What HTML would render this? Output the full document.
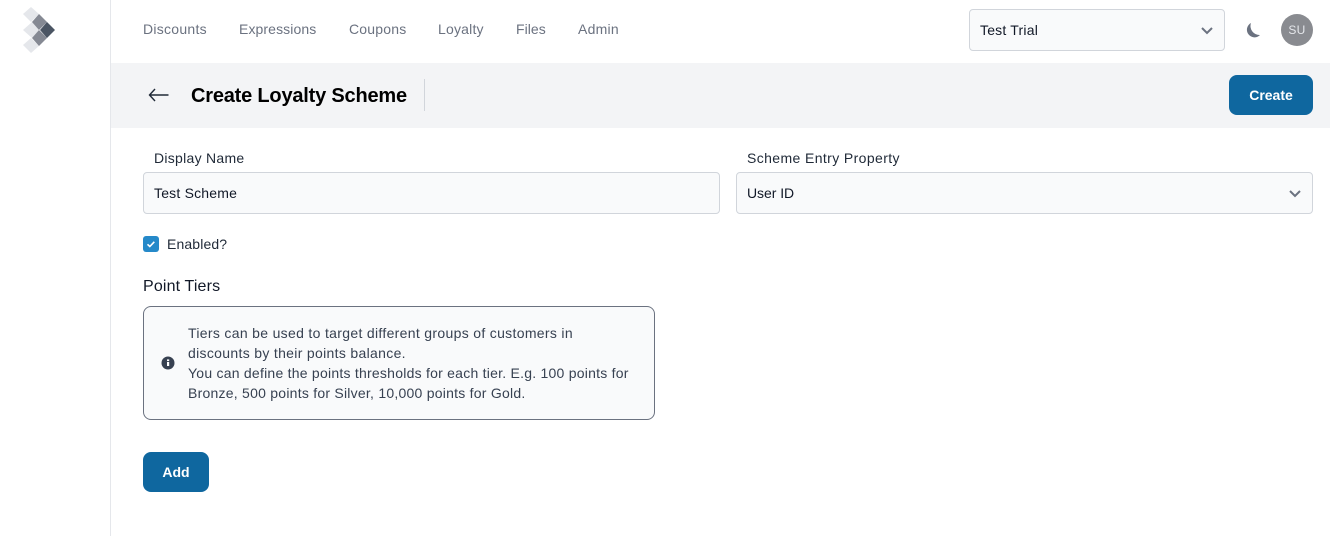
<!DOCTYPE html>
<html><head><meta charset="utf-8"><style>
*{box-sizing:border-box}
html,body{margin:0;padding:0;background:#fff}
body{width:1330px;height:536px;overflow:hidden;position:relative;font-family:"Liberation Sans",sans-serif;color:#1f2937}
.a{position:absolute;white-space:nowrap}
.t{line-height:20px;font-size:14px}
.nav{color:#6b7280;top:19px;line-height:20px;font-size:14px}
.box{position:absolute;background:#f9fafb;border:1px solid #d1d5db;border-radius:4px}
.btn{position:absolute;background:#0f679f;border-radius:8px;color:#fff;font-weight:bold;font-size:14px;text-align:center;line-height:40px}
.info{left:188px;font-size:14px;line-height:20px;color:#374151}
</style></head><body>
<div class="a" style="left:110px;top:0;width:1px;height:536px;background:#e5e7eb"></div>
<svg class="a" style="left:0;top:0" width="60" height="60" viewBox="0 0 60 60">
<polygon points="23,14 31,7 39,14 31,22" fill="#e5e7eb"/>
<polygon points="23,30 32,22 39,30 32,38" fill="#e5e7eb"/>
<polygon points="23,45 31,38 39,46 31,53" fill="#e5e7eb"/>
<polygon points="32,22 39,14 47,22 39,30" fill="#858993"/>
<polygon points="32,38 39,30 47,38 39,46" fill="#858993"/>
<polygon points="40,30 47,22 55,30 47,38" fill="#4b5563"/>
</svg>
<div class="a nav" style="left:143px;letter-spacing:.27px">Discounts</div>
<div class="a nav" style="left:239px;letter-spacing:.1px">Expressions</div>
<div class="a nav" style="left:349px;letter-spacing:.2px">Coupons</div>
<div class="a nav" style="left:438px;letter-spacing:.2px">Loyalty</div>
<div class="a nav" style="left:516px;letter-spacing:.05px">Files</div>
<div class="a nav" style="left:578px;letter-spacing:.25px">Admin</div>
<div class="box" style="left:969px;top:9px;width:256px;height:42px"></div>
<div class="a t" style="left:980px;top:20px;color:#111827;letter-spacing:.2px">Test Trial</div>
<svg class="a" style="left:1200px;top:23px" width="14" height="14" viewBox="0 0 14 14"><path d="M2 5l5 5 5-5" fill="none" stroke="#6b7280" stroke-width="2"/></svg>
<svg class="a" style="left:1244px;top:21px" width="18" height="18" viewBox="0 0 18 18"><path d="M7 2A7.600 7.600 0 1 0 16 14A9 9 0 0 1 7 2Z" fill="#6b7280"/></svg>
<div class="a" style="left:1281px;top:14px;width:32px;height:32px;border-radius:50%;background:#898b90;color:#e5e7eb;font-size:12px;line-height:32px;text-align:center;letter-spacing:.3px">SU</div>
<div class="a" style="left:111px;top:63px;width:1219px;height:65px;background:#f3f4f6"></div>
<svg class="a" style="left:147px;top:86px" width="24" height="18" viewBox="0 0 24 18"><path d="M21.500 9H2.500M8 3L2.500 9 8 15" fill="none" stroke="#1f2937" stroke-width="1.400"/></svg>
<div class="a" style="left:191px;top:83px;font-size:20px;line-height:26px;font-weight:bold;color:#000;letter-spacing:-.2px">Create Loyalty Scheme</div>
<div class="a" style="left:424px;top:79px;width:1px;height:32px;background:#d1d5db"></div>
<div class="btn" style="left:1229px;top:75px;width:84px;height:40px">Create</div>
<div class="a t" style="left:154px;top:148px;letter-spacing:.28px">Display Name</div>
<div class="box" style="left:143px;top:172px;width:577px;height:42px"></div>
<div class="a t" style="left:154px;top:183px;color:#111827;letter-spacing:.2px">Test Scheme</div>
<div class="a t" style="left:747px;top:148px;letter-spacing:.39px">Scheme Entry Property</div>
<div class="box" style="left:736px;top:172px;width:577px;height:42px"></div>
<div class="a t" style="left:747px;top:183px;color:#111827;letter-spacing:-.05px">User ID</div>
<svg class="a" style="left:1288px;top:186px" width="14" height="14" viewBox="0 0 14 14"><path d="M2 5l5 5 5-5" fill="none" stroke="#6b7280" stroke-width="2"/></svg>
<div class="a" style="left:143px;top:236px;width:16px;height:16px;border-radius:3px;background:#2589c9"></div>
<svg class="a" style="left:143px;top:236px" width="16" height="16" viewBox="0 0 16 16"><path d="M4.500 8.300l2.300 2.200 4.500-4.700" fill="none" stroke="#fff" stroke-width="1.600"/></svg>
<div class="a t" style="left:167px;top:234px;letter-spacing:.13px">Enabled?</div>
<div class="a" style="left:143px;top:276px;font-size:16px;line-height:21px;color:#111827;letter-spacing:.15px">Point Tiers</div>
<div class="a" style="left:143px;top:306px;width:512px;height:114px;background:#f9fafb;border:1px solid #6b7280;border-radius:8px"></div>
<svg class="a" style="left:161px;top:356px" width="14" height="14" viewBox="0 0 14 14"><circle cx="7" cy="7" r="6.500" fill="#374151"/><rect x="6" y="6" width="2.200" height="4" fill="#fff"/><rect x="6" y="3.400" width="2.200" height="1.700" fill="#fff"/></svg>
<div class="a info" style="top:323px;letter-spacing:.32px">Tiers can be used to target different groups of customers in</div>
<div class="a info" style="top:343px;letter-spacing:.32px">discounts by their points balance.</div>
<div class="a info" style="top:363px;letter-spacing:.24px">You can define the points thresholds for each tier. E.g. 100 points for</div>
<div class="a info" style="top:383px;letter-spacing:.24px">Bronze, 500 points for Silver, 10,000 points for Gold.</div>
<div class="btn" style="left:143px;top:452px;width:66px;height:40px">Add</div>
</body></html>
